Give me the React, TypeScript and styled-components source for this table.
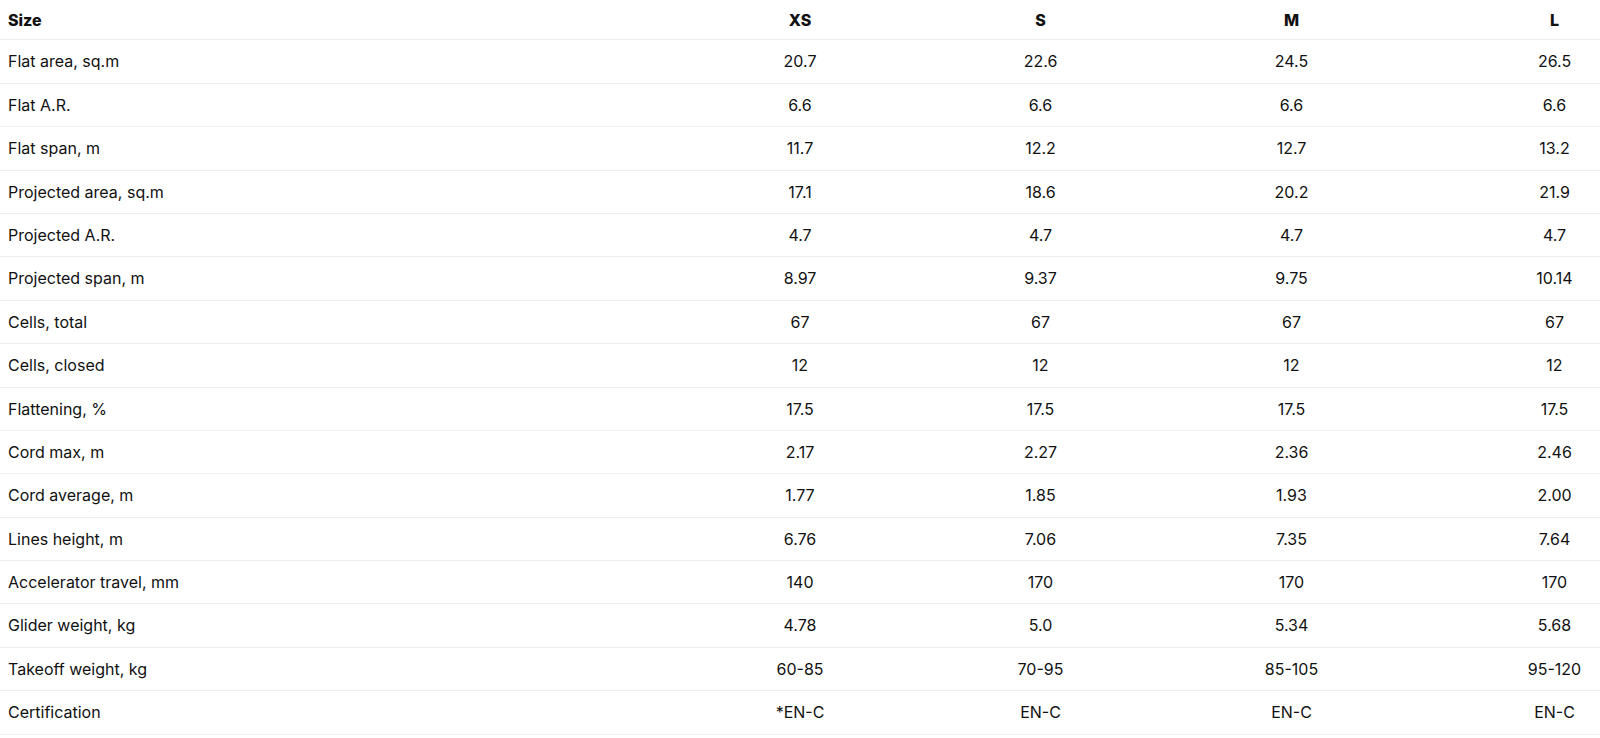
import styled, { createGlobalStyle } from "styled-components";

const GlobalStyle = createGlobalStyle`
  html, body {
    margin: 0;
    padding: 0;
    background: #ffffff;
    overflow: hidden;
  }
  body {
    font-family: Inter, "Noto Sans", "Liberation Sans", sans-serif;
    color: #111111;
  }
`;

const Wrapper = styled.div`
  width: 100vw;
  overflow: hidden;
`;

// the table runs a bit past the viewport, the last column is cut off on the right
const SpecTable = styled.div`
  width: 1687px;
  display: flex;
  flex-direction: column;
  font-size: 16px;
  line-height: 1.4;
`;

const Row = styled.div<{ $head?: boolean }>`
  display: grid;
  grid-template-columns: 680px 240px 241px 261px 265px;
  align-items: center;
  padding: ${(p) => (p.$head ? "9px 0 8px" : "10px 0")};
  border-bottom: 1px solid #eeeeee;
  font-weight: ${(p) => (p.$head ? 800 : 400)};
`;

const Label = styled.div`
  padding-left: 8px;
  white-space: nowrap;
`;

const Value = styled.div`
  text-align: center;
  white-space: nowrap;
`;

const sizes = ["XS", "S", "M", "L"];

const rows: [string, string[]][] = [
  ["Flat area, sq.m", ["20.7", "22.6", "24.5", "26.5"]],
  ["Flat A.R.", ["6.6", "6.6", "6.6", "6.6"]],
  ["Flat span, m", ["11.7", "12.2", "12.7", "13.2"]],
  ["Projected area, sq.m", ["17.1", "18.6", "20.2", "21.9"]],
  ["Projected A.R.", ["4.7", "4.7", "4.7", "4.7"]],
  ["Projected span, m", ["8.97", "9.37", "9.75", "10.14"]],
  ["Cells, total", ["67", "67", "67", "67"]],
  ["Cells, closed", ["12", "12", "12", "12"]],
  ["Flattening, %", ["17.5", "17.5", "17.5", "17.5"]],
  ["Cord max, m", ["2.17", "2.27", "2.36", "2.46"]],
  ["Cord average, m", ["1.77", "1.85", "1.93", "2.00"]],
  ["Lines height, m", ["6.76", "7.06", "7.35", "7.64"]],
  ["Accelerator travel, mm", ["140", "170", "170", "170"]],
  ["Glider weight, kg", ["4.78", "5.0", "5.34", "5.68"]],
  ["Takeoff weight, kg", ["60-85", "70-95", "85-105", "95-120"]],
  ["Certification", ["*EN-C", "EN-C", "EN-C", "EN-C"]],
];

function App() {
  return (
    <Wrapper>
      <GlobalStyle />
      <SpecTable>
        <Row $head>
          <Label>Size</Label>
          {sizes.map((s) => (
            <Value key={s}>{s}</Value>
          ))}
        </Row>
        {rows.map(([label, values]) => (
          <Row key={label}>
            <Label>{label}</Label>
            {values.map((v, i) => (
              <Value key={i}>{v}</Value>
            ))}
          </Row>
        ))}
      </SpecTable>
    </Wrapper>
  );
}

export default App;
